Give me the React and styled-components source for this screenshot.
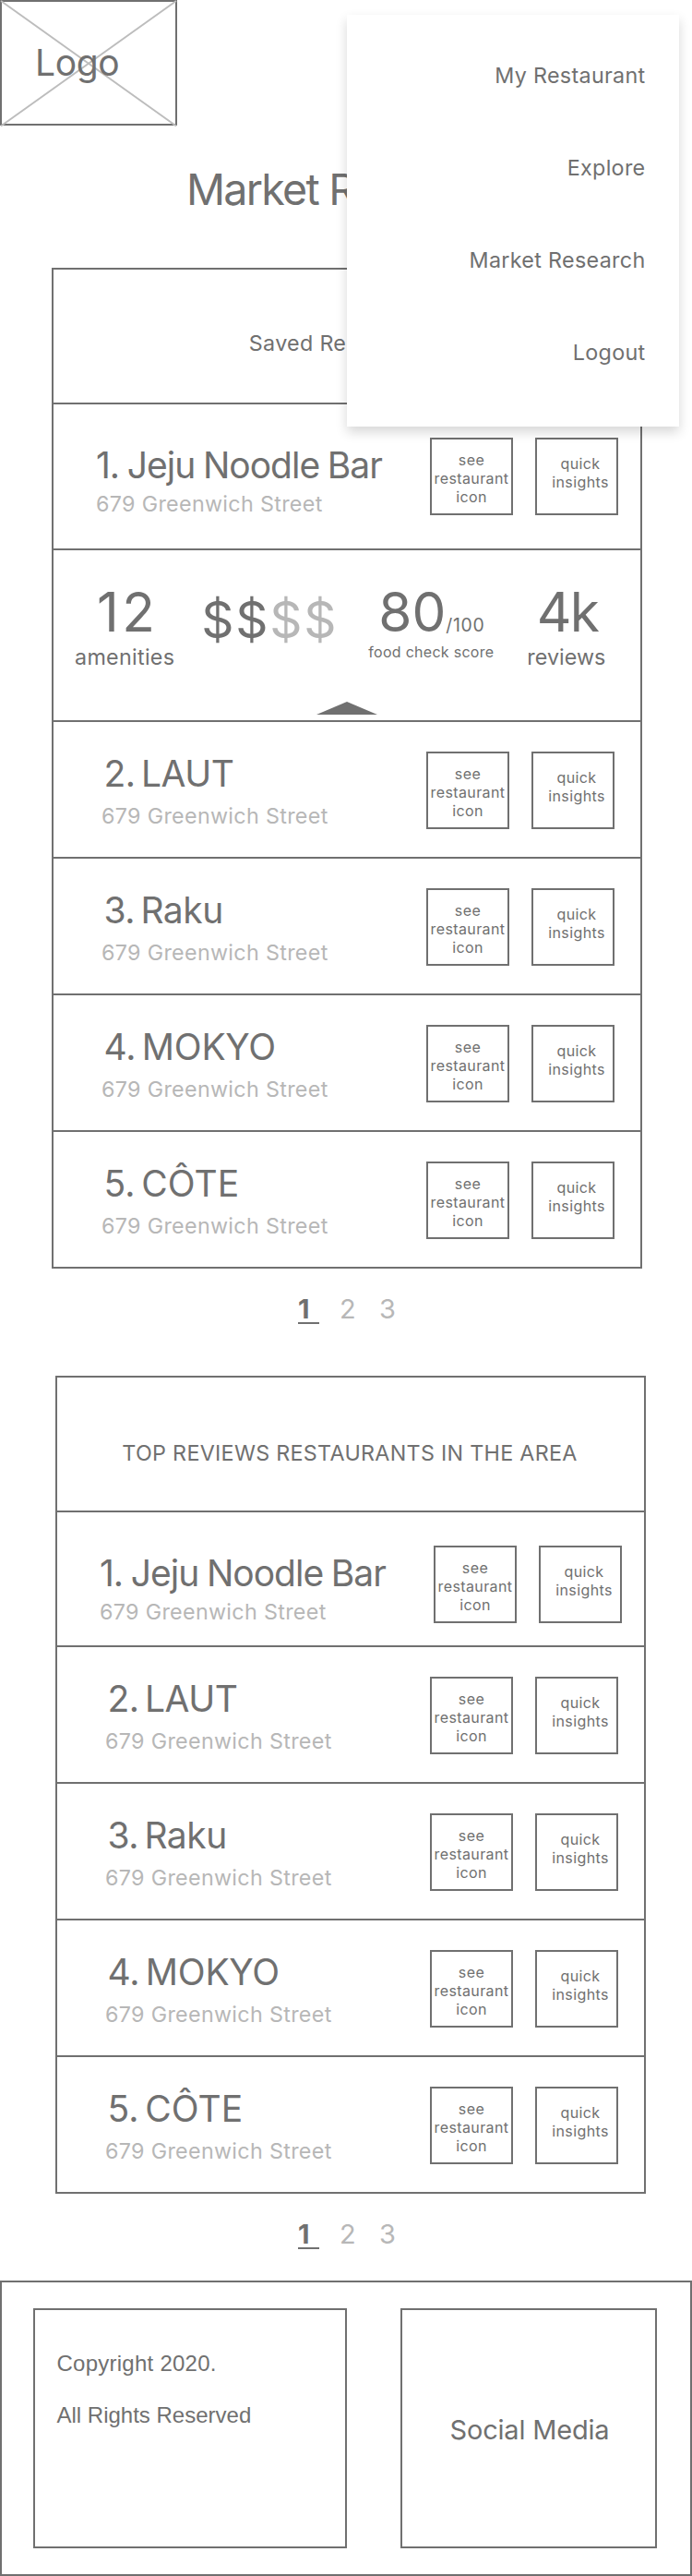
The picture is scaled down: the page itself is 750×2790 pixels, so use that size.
import React from "react";
import styled, { createGlobalStyle } from "styled-components";

const ink = "#707070";
const faded = "#b7b7b7";

const GlobalStyle = createGlobalStyle`
  *, *::before, *::after { box-sizing: border-box; }
  body {
    margin: 0;
    background: #fff;
    color: ${ink};
    font-family: Inter, "Liberation Sans", sans-serif;
  }
  h1, h2, h3, p { margin: 0; font-weight: 400; }
`;

const Page = styled.div`
  position: relative;
  display: flex;
  flex-direction: column;
  width: 750px;
  height: 2790px;
  overflow: hidden;
`;

const LogoBox = styled.div`
  position: relative;
  width: 192px;
  height: 136px;
  padding: 42px 0 0 36px;
  border: 2px solid ${ink};
`;

const LogoCross = styled.svg`
  position: absolute;
  left: -2px;
  top: -2px;
  width: 192px;
  height: 137px;
  overflow: visible;
`;

const LogoText = styled.span`
  position: relative;
  display: block;
  font-size: 39px;
  line-height: 47px;
  letter-spacing: -0.37px;
`;

const PageTitle = styled.h1`
  margin: 41px 0 57px;
  font-size: 46.6px;
  line-height: 56px;
  letter-spacing: -1.75px;
  text-align: center;
`;

const Menu = styled.nav`
  position: absolute;
  left: 376px;
  top: 16px;
  z-index: 1;
  display: flex;
  flex-direction: column;
  align-items: flex-end;
  gap: 69px;
  width: 360px;
  height: 446px;
  padding: 50px 36.5px 0 0;
  background: #fff;
  box-shadow: 0 6px 12px rgba(0, 0, 0, 0.16);
`;

const MenuItem = styled.a`
  font-size: 23.3px;
  line-height: 31px;
  letter-spacing: 0.32px;
`;

const Table = styled.section`
  width: 640px;
  flex: none;
  margin-left: ${(p) => p.$left}px;
  border: 2px solid ${ink};
`;

const TableHeader = styled.h2`
  height: 144px;
  padding: ${(p) => p.$top}px 2px 0 0;
  font-size: 23.3px;
  line-height: 31px;
  letter-spacing: 0.3px;
  text-align: center;
`;

const Row = styled.div`
  display: flex;
  justify-content: space-between;
  height: ${(p) => p.$height}px;
  padding: ${(p) => (p.$lead ? "36px 24px 0 46px" : "32px 28px 0 52px")};
  border-top: 2px solid ${ink};
  box-sizing: content-box;
  width: ${(p) => (p.$lead ? 566 : 556)}px;
`;

const Info = styled.div`
  padding-top: ${(p) => (p.$lead ? 6 : 0)}px;
`;

const Name = styled.h3`
  margin: 0 0 ${(p) => (p.$lead ? 3 : 7)}px ${(p) => (p.$lead ? 0 : 2.5)}px;
  font-size: 39px;
  line-height: 47px;
  letter-spacing: ${(p) => p.$tracking}px;
  word-spacing: ${(p) => (p.$lead ? -1.3 : -4)}px;
  white-space: nowrap;
`;

const Address = styled.p`
  color: ${faded};
  font-size: 23.3px;
  line-height: 31px;
  letter-spacing: 0.32px;
  white-space: nowrap;
`;

const Actions = styled.div`
  display: flex;
  gap: 24px;
`;

const ActionButton = styled.button`
  width: 90px;
  height: 84px;
  padding: ${(p) => (p.$insights ? "16px 0 0 8px" : "12px 0 0 0")};
  display: flex;
  flex-direction: column;
  align-items: center;
  border: 2px solid ${ink};
  background: transparent;
  color: ${ink};
  font-family: inherit;
  font-size: 16px;
  line-height: 20px;
  letter-spacing: 0.4px;
`;

const Details = styled.div`
  display: flex;
  flex-direction: column;
  height: 186px;
  padding: 33px 0 6px 23px;
  border-top: 2px solid ${ink};
`;

const Stats = styled.div`
  display: flex;
  align-items: flex-start;
`;

const Stat = styled.div`
  display: flex;
  flex-direction: column;
  align-items: center;
  margin-left: ${(p) => p.$gap || 0}px;
`;

const Figure = styled.div`
  padding-left: ${(p) => p.$shift || 0}px;
  font-size: 58.5px;
  line-height: 67px;
  height: 67px;
  letter-spacing: ${(p) => p.$tracking || 0}px;
  white-space: nowrap;
`;

const OutOf = styled.span`
  font-size: 19.4px;
  line-height: 1;
  letter-spacing: 0.7px;
`;

const Label = styled.div`
  font-size: 23.3px;
  line-height: 31px;
  letter-spacing: ${(p) => p.$tracking}px;
`;

const SmallLabel = styled.div`
  font-size: 16px;
  line-height: 20px;
  letter-spacing: 0.28px;
  white-space: nowrap;
`;

const Price = styled.div`
  display: flex;
  margin: 9px 0 0 29px;
  font-size: 55px;
  line-height: 66px;
  letter-spacing: 1.7px;
`;

const PriceRest = styled.span`
  color: ${faded};
`;

const Collapse = styled.svg`
  align-self: center;
  margin: auto 24px 0 0;
  display: block;
`;

const Pagination = styled.nav`
  flex: none;
  display: flex;
  gap: 22px;
  height: ${(p) => p.$height}px;
  margin-top: 26px;
  padding-left: 323px;
`;

const PageLink = styled.a`
  width: ${(p) => (p.$active ? 23 : 21)}px;
  height: 34px;
  border-bottom: 2px solid ${(p) => (p.$active ? ink : "transparent")};
  color: ${(p) => (p.$active ? ink : faded)};
  font-size: 29px;
  font-weight: ${(p) => (p.$active ? 700 : 400)};
  line-height: 35px;
`;

const Footer = styled.footer`
  flex: none;
  display: flex;
  justify-content: space-between;
  height: 320px;
  padding: 28px 36px 0 34px;
  border: 2px solid ${ink};
`;

const Legal = styled.div`
  display: flex;
  flex-direction: column;
  gap: 29px;
  width: 340px;
  height: 260px;
  padding: 44px 0 0 23.5px;
  border: 2px solid ${ink};
  font-family: "Liberation Sans", Arial, sans-serif;
  font-size: 24px;
  line-height: 27px;
`;

const Copyright = styled.p`
  letter-spacing: 0.25px;
`;

const Social = styled.div`
  width: 278px;
  height: 260px;
  padding: 112px 0 0 2px;
  border: 2px solid ${ink};
  font-size: 29px;
  line-height: 35px;
  letter-spacing: -0.2px;
  text-align: center;
`;

const menuItems = ["My Restaurant", "Explore", "Market Research", "Logout"];

const restaurants = [
  { name: "1. Jeju Noodle Bar", tracking: -1, lead: true },
  { name: "2. LAUT", tracking: -0.5 },
  { name: "3. Raku", tracking: -0.5 },
  { name: "4. MOKYO", tracking: -0.25 },
  { name: "5. CÔTE", tracking: 0 },
];

function Restaurant({ name, tracking, lead, height }) {
  return (
    <Row $lead={lead} $height={height}>
      <Info $lead={lead}>
        <Name $lead={lead} $tracking={tracking}>{name}</Name>
        <Address>679 Greenwich Street</Address>
      </Info>
      <Actions>
        <ActionButton>
          <span>see</span>
          <span>restaurant</span>
          <span>icon</span>
        </ActionButton>
        <ActionButton $insights>
          <span>quick</span>
          <span>insights</span>
        </ActionButton>
      </Actions>
    </Row>
  );
}

function QuickInsights() {
  return (
    <Details>
      <Stats>
        <Stat>
          <Figure $tracking={3.4} $shift={6}>12</Figure>
          <Label $tracking={0.3}>amenities</Label>
        </Stat>
        <Price>
          <span>$$</span>
          <PriceRest>$$</PriceRest>
        </Price>
        <Stat $gap={33}>
          <Figure $shift={1}>80<OutOf>/100</OutOf></Figure>
          <SmallLabel>food check score</SmallLabel>
        </Stat>
        <Stat $gap={36}>
          <Figure $tracking={-1.8} $shift={2}>4k</Figure>
          <Label $tracking={0.05}>reviews</Label>
        </Stat>
      </Stats>
      <Collapse width="66" height="14" viewBox="0 0 66 14">
        <polygon points="33,0 66,14 0,14" fill={ink} />
      </Collapse>
    </Details>
  );
}

function Pages({ height }) {
  return (
    <Pagination $height={height}>
      <PageLink $active>1</PageLink>
      <PageLink>2</PageLink>
      <PageLink>3</PageLink>
    </Pagination>
  );
}

export default function App() {
  return (
    <>
      <GlobalStyle />
      <Page>
        <LogoBox>
          <LogoCross viewBox="0 0 192 137">
            <path d="M1 1L191 136.500M191 1L1 136.500" stroke="#bdbdbd" strokeWidth="2" fill="none" />
          </LogoCross>
          <LogoText>Logo</LogoText>
        </LogoBox>
        <PageTitle>Market Research</PageTitle>

        <Table $left={56}>
          <TableHeader $top={64}>Saved Restaurants</TableHeader>
          {restaurants.map((r) => (
            <React.Fragment key={r.name}>
              <Restaurant {...r} height={r.lead ? 120 : 114} />
              {r.lead && <QuickInsights />}
            </React.Fragment>
          ))}
        </Table>
        <Pages height={90} />

        <Table $left={60}>
          <TableHeader $top={66}>TOP REVIEWS RESTAURANTS IN THE AREA</TableHeader>
          {restaurants.map((r) => (
            <Restaurant key={r.name} {...r} height={r.lead ? 108 : 114} />
          ))}
        </Table>
        <Pages height={68} />

        <Footer>
          <Legal>
            <Copyright>Copyright 2020.</Copyright>
            <p>All Rights Reserved</p>
          </Legal>
          <Social>Social Media</Social>
        </Footer>

        <Menu>
          {menuItems.map((item) => (
            <MenuItem key={item}>{item}</MenuItem>
          ))}
        </Menu>
      </Page>
    </>
  );
}
